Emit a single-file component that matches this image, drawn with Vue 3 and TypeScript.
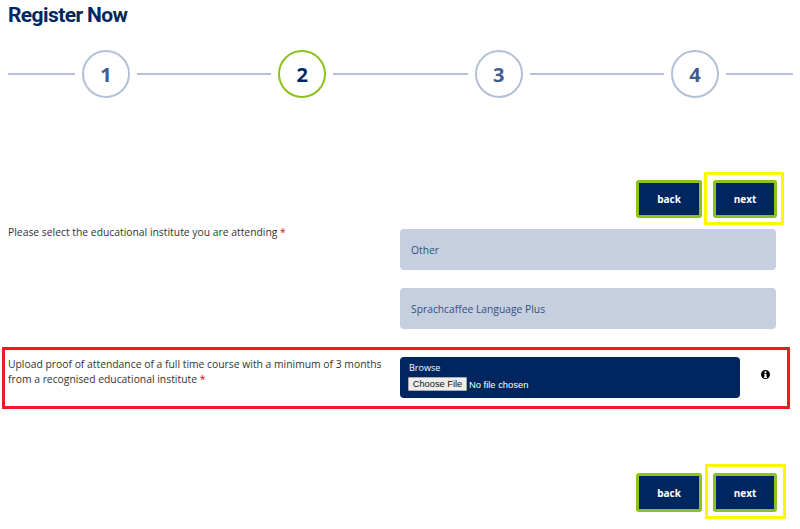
<script setup lang="ts">
const steps = [1, 2, 3, 4]
const currentStep = 2
</script>

<template>
  <div class="page">
    <h1 class="title">Register Now</h1>

    <div class="stepper">
      <template v-for="step in steps" :key="step">
        <span class="line" />
        <span class="circle" :class="{ active: step === currentStep }">{{ step }}</span>
      </template>
      <span class="line last" />
    </div>

    <div class="actions top">
      <button class="btn" type="button">back</button>
      <div class="highlight">
        <button class="btn next" type="button">next</button>
      </div>
    </div>

    <div class="row">
      <label class="label">Please select the educational institute you are attending <span class="req">*</span></label>
      <div class="fields">
        <div class="field">Other</div>
        <div class="field">Sprachcaffee Language Plus</div>
      </div>
    </div>

    <div class="row upload-row">
      <label class="label">Upload proof of attendance of a full time course with a minimum of 3 months from a recognised educational institute <span class="req">*</span></label>
      <div class="upload">
        <span class="browse">Browse</span>
        <div class="file-line">
          <span class="choose">Choose File</span>
          <span class="no-file">No file chosen</span>
        </div>
      </div>
      <svg class="info" viewBox="0 0 24 24" width="9" height="9" aria-hidden="true">
        <path fill-rule="evenodd" d="M12 0a12 12 0 1 0 0 24 12 12 0 0 0 0-24zM9.5 3.5h5v4.5h-5zM8.5 10h6v8h1.500v3h-8v-3h1.500v-5h-1z" />
      </svg>
    </div>

    <div class="actions bottom">
      <button class="btn" type="button">back</button>
      <div class="highlight">
        <button class="btn next" type="button">next</button>
      </div>
    </div>
  </div>
</template>

<style scoped>
.page {
  width: 800px;
  height: 529px;
  overflow: hidden;
  background: #fff;
  font-family: "Open Sans", "Liberation Sans", sans-serif;
  color: #333;
}

.title {
  margin: 0;
  padding: 3px 0 0 8px;
  height: 47px;
  box-sizing: border-box;
  font-family: Roboto, "Liberation Sans", sans-serif;
  font-size: 21px;
  line-height: 24px;
  font-weight: 700;
  letter-spacing: -0.6px;
  color: #00265f;
}

.stepper {
  display: flex;
  align-items: center;
  gap: 7px;
  height: 54px;
  padding: 0 7px 0 8px;
}

.line {
  flex: 1 1 0;
  height: 1.5px;
  background: #b3c0d6;
}

.line:first-child,
.line.last {
  flex: 0 0 67px;
}

.circle {
  flex: 0 0 48px;
  width: 48px;
  height: 48px;
  box-sizing: border-box;
  border: 2px solid #b3c0d6;
  border-radius: 50%;
  display: flex;
  align-items: center;
  justify-content: center;
  font-size: 20px;
  font-weight: 700;
  color: #405c8c;
}

.circle.active {
  border-color: #8cc11f;
  color: #00265f;
}

.actions {
  display: flex;
  align-items: flex-start;
  gap: 2px;
  justify-content: flex-end;
}

.actions.top {
  margin-top: 71px;
  padding-right: 16px;
}

.actions.top > .btn {
  margin-top: 8px;
}

.actions.bottom {
  margin-top: 55px;
  padding-right: 14px;
  gap: 3px;
}

.actions.bottom > .btn {
  margin-top: 9px;
}

.actions.bottom .btn {
  height: 39px;
}

.highlight {
  border: 3px solid #fff700;
  padding: 5px 4px 4px 6px;
}

.actions.bottom .highlight {
  padding: 6px 6px 4px 5px;
}

.btn {
  display: block;
  width: 66px;
  height: 38px;
  padding: 0;
  background: #00265f;
  border: 3px solid #8cc11f;
  border-radius: 3px;
  color: #fff;
  font-family: inherit;
  font-size: 10px;
  font-weight: 700;
}

.btn.next {
  width: 64px;
}

.row {
  display: flex;
  box-sizing: border-box;
}

.label {
  flex: 0 0 400px;
  box-sizing: border-box;
  padding: 0 8px;
  font-size: 10.35px;
  line-height: 15px;
}

.req {
  color: #e3000f;
}

.fields {
  width: 376px;
  display: flex;
  flex-direction: column;
  gap: 18px;
  margin-top: 4px;
}

.field {
  height: 41px;
  display: flex;
  align-items: center;
  padding-left: 11px;
  border-radius: 4px;
  background: #c6cfdf;
  color: #33507f;
  font-size: 10.3px;
}

.upload-row {
  margin: 18px 10px 0 2px;
  height: 62px;
  border: 3px solid #ed1c24;
  align-items: flex-start;
}

.upload-row .label {
  flex-basis: 395px;
  padding: 7px 8px 0 3px;
}

.upload {
  width: 340px;
  height: 41px;
  margin-top: 7px;
  box-sizing: border-box;
  padding: 5px 8px;
  border-radius: 4px;
  background: #00265f;
  color: #fff;
  font-size: 9px;
}

.browse {
  display: block;
  margin-left: 1px;
  line-height: 12px;
}

.file-line {
  display: flex;
  align-items: center;
  gap: 2px;
  margin-top: 3px;
}

.choose {
  width: 59px;
  height: 14px;
  box-sizing: border-box;
  background: #efefef;
  border: 1px solid #aaa;
  border-radius: 1px;
  color: #111;
  font-family: "Liberation Sans", sans-serif;
  font-size: 9.3px;
  line-height: 12px;
  text-align: center;
}

.no-file {
  font-family: "Liberation Sans", sans-serif;
  font-size: 9.4px;
}

.info {
  margin: 20px 0 0 21px;
  fill: #000;
}
</style>
